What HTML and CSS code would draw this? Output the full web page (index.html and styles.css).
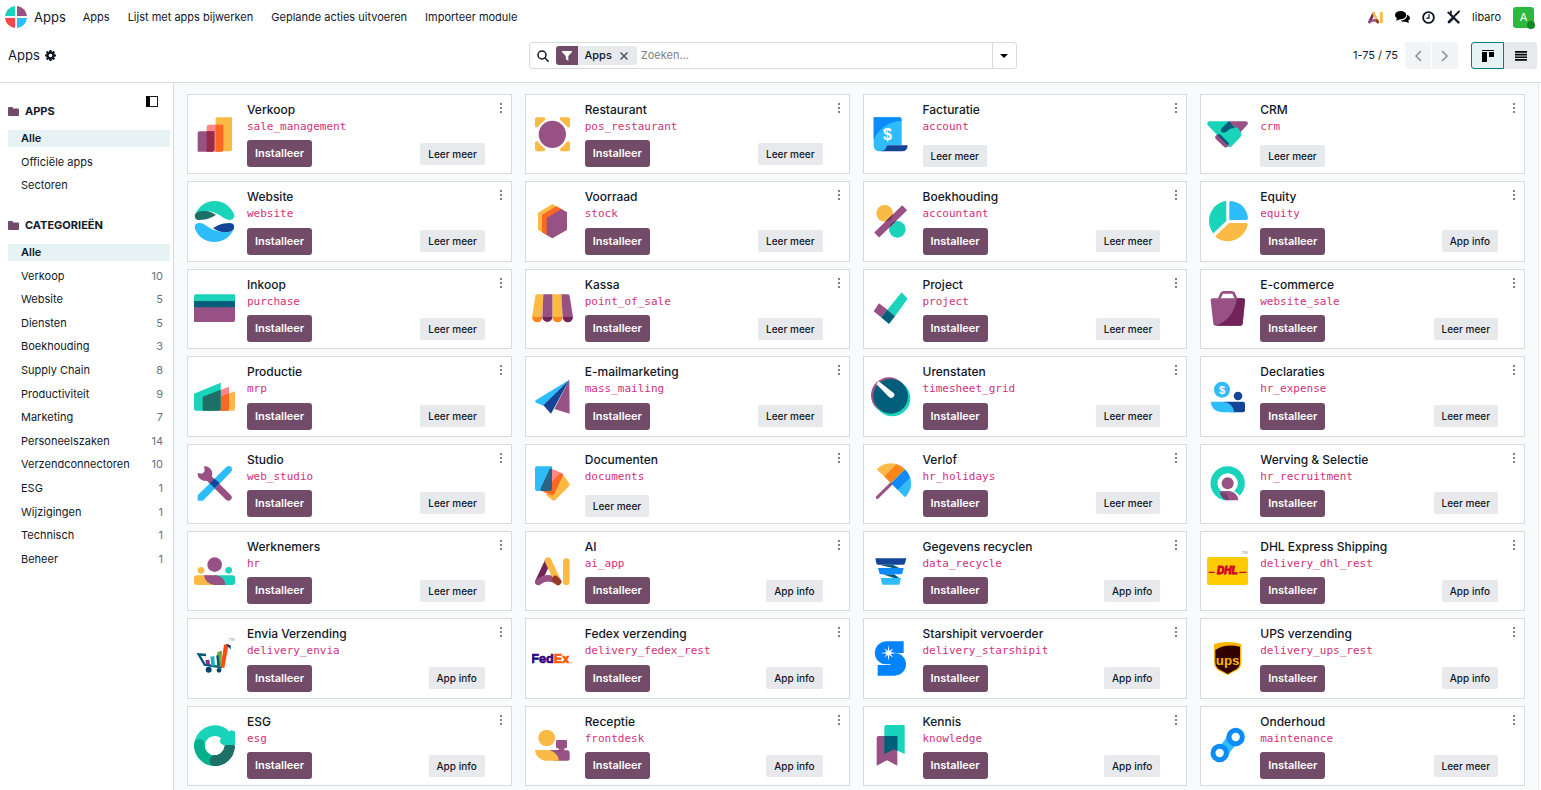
FILE: index.html
```html
<!DOCTYPE html>
<html lang="nl">
<head>
  <meta charset="UTF-8">
  <meta name="viewport" content="width=device-width, initial-scale=1.0">
  <title>Apps</title>
  <link rel="stylesheet" href="styles.css">
</head>
<body>
  <header class="navbar">
    <a class="brand" href="#">
      <svg class="brand-logo" viewBox="0 0 66 66"><path d="M30 0V30H0A33 33 0 0 1 30 0Z" fill="#1ad3bb"/><path d="M36 0V30H66A33 33 0 0 0 36 0Z" fill="#985184"/><path d="M30 66V36H0A33 33 0 0 0 30 66Z" fill="#ff4548"/><path d="M36 66V36H66A33 33 0 0 1 36 66Z" fill="#2ebcfa"/></svg>
      <span>Apps</span>
    </a>
    <nav class="menu">
      <a href="#">Apps</a>
      <a href="#">Lijst met apps bijwerken</a>
      <a href="#">Geplande acties uitvoeren</a>
      <a href="#">Importeer module</a>
    </nav>
    <div class="systray">
      <button type="button" aria-label="AI"><svg width="15" height="13" viewBox="0 0 105 84"><path d="M10 74L39 12" stroke="#71235a" stroke-width="18" stroke-linecap="round"/><path d="M10 74Q40 48 69 74" stroke="#985184" stroke-width="17" stroke-linecap="round" fill="none"/><path d="M39 12L69 74M94 11V74" stroke="#fbb945" stroke-width="19" stroke-linecap="round"/><path d="M60 62L69 74" stroke="#953b24" stroke-width="18" stroke-linecap="round"/></svg></button>
      <button type="button" aria-label="Berichten"><svg width="15" height="14" viewBox="0 0 16 14"><ellipse cx="6" cy="5" rx="6" ry="4.5"/><path d="M2 8L1 11L6 9Z"/><path d="M13 4.500C17 6 16.500 10 14 11L15 13.500L11 12C9 12.300 7 11.800 6 10.700C10.500 10.500 13 8 13 4.500Z"/></svg></button>
      <button type="button" aria-label="Activiteiten"><svg width="13" height="13" viewBox="0 0 14 14" fill="none" stroke="#111827" stroke-width="2"><circle cx="7" cy="7" r="5.800"/><path d="M7.500 3.500V7.700H4.500" stroke-width="1.400"/></svg></button>
      <button type="button" aria-label="Hulpmiddelen"><svg width="13" height="14" viewBox="0 0 13 14" fill="none" stroke="#111827" stroke-linecap="round"><path d="M4 5L11.500 12.500" stroke-width="2.400"/><path d="M1.200 2.500L3.500 4.500L4 1.500" stroke-width="1.800"/><path d="M12 1.500L7.500 6" stroke-width="1.800"/><path d="M5.500 8.500L2 12" stroke-width="2.800"/></svg></button>
      <span class="company">libaro</span>
      <button type="button" class="avatar" aria-label="Gebruiker">A<span class="status"></span></button>
    </div>
  </header>

  <div class="control-panel">
    <div class="breadcrumb">
      <h1>Apps</h1>
      <button type="button" aria-label="Acties"><svg width="11" height="11" viewBox="0 0 12 12"><circle cx="6" cy="6" r="3.300" fill="none" stroke="#111827" stroke-width="2.600"/><path d="M6 0V2.500M6 9.500V12M0 6H2.500M9.500 6H12M1.800 1.800L3.500 3.500M8.500 8.500L10.200 10.200M10.200 1.800L8.500 3.500M3.500 8.500L1.800 10.200" stroke="#111827" stroke-width="2.400"/></svg></button>
    </div>
    <div class="search">
      <svg class="search-icon" width="12" height="12" viewBox="0 0 12 12" fill="none" stroke="#111827" stroke-width="1.500" stroke-linecap="round"><circle cx="5" cy="5" r="4"/><path d="M8 8L11.200 11.200"/></svg>
      <div class="facet">
        <span class="facet-icon"><svg width="10" height="10" viewBox="0 0 10 10"><path d="M0 0H10V1L6.300 5V10L3.800 8V5L0 1Z" fill="#fff"/></svg></span>
        <span class="facet-label">Apps</span>
        <button type="button" aria-label="Verwijderen"><svg width="8" height="8" viewBox="0 0 8 8"><path d="M0.500 0.500L7.500 7.500M7.500 0.500L0.500 7.500" stroke="#4b5563" stroke-width="1.500"/></svg></button>
      </div>
      <input type="text" placeholder="Zoeken..." aria-label="Zoeken">
      <button type="button" class="search-toggle" aria-label="Filters"><svg width="8" height="4" viewBox="0 0 8 4"><path d="M0 0H8L4 4Z"/></svg></button>
    </div>
    <div class="panel-right">
      <span class="pager-text">1-75 / 75</span>
      <div class="pager">
        <button type="button" aria-label="Vorige"><svg width="8" height="12" viewBox="0 0 8 12"><path d="M7 1L2 6L7 11" fill="none" stroke="#8b8f98" stroke-width="1.500"/></svg></button>
        <button type="button" aria-label="Volgende"><svg width="8" height="12" viewBox="0 0 8 12"><path d="M1 1L6 6L1 11" fill="none" stroke="#8b8f98" stroke-width="1.500"/></svg></button>
      </div>
      <div class="views">
        <button type="button" class="active" aria-label="Kanban"><svg width="12" height="12" viewBox="0 0 12 12"><path d="M0 0H12V1H0ZM0 2H5V12H0ZM7 2H12V7H7Z"/></svg></button>
        <button type="button" aria-label="Lijst"><svg width="12" height="10" viewBox="0 0 12 10"><path d="M0 0H12V1.700H0ZM0 2.700H12V4.400H0ZM0 5.400H12V7.100H0ZM0 8.100H12V9.800H0Z"/></svg></button>
      </div>
    </div>
  </div>

  <div class="content">
    <aside class="sidebar">
      <button type="button" class="sidebar-toggle" aria-label="Zijbalk"><svg width="12" height="11" viewBox="0 0 12 11"><rect x="0.500" y="0.500" width="11" height="10" fill="none" stroke="#111827"/><path d="M0 0H4V11H0Z"/></svg></button>
      <section>
        <h2><svg width="11" height="9" viewBox="0 0 11 9"><path d="M0 1Q0 0 1 0H4Q5 0 5 1V1.500H10Q11 1.500 11 2.500V8Q11 9 10 9H1Q0 9 0 8Z" fill="#714b67"/></svg>APPS</h2>
        <ul>
          <li class="selected"><a href="#">Alle</a></li>
          <li><a href="#">Officiële apps</a></li>
          <li><a href="#">Sectoren</a></li>
        </ul>
      </section>
      <section>
        <h2><svg width="11" height="9" viewBox="0 0 11 9"><path d="M0 1Q0 0 1 0H4Q5 0 5 1V1.500H10Q11 1.500 11 2.500V8Q11 9 10 9H1Q0 9 0 8Z" fill="#714b67"/></svg>CATEGORIEËN</h2>
        <ul class="categories">
          <li class="selected"><a href="#">Alle</a></li>
          <li><a href="#">Verkoop</a><span>10</span></li>
          <li><a href="#">Website</a><span>5</span></li>
          <li><a href="#">Diensten</a><span>5</span></li>
          <li><a href="#">Boekhouding</a><span>3</span></li>
          <li><a href="#">Supply Chain</a><span>8</span></li>
          <li><a href="#">Productiviteit</a><span>9</span></li>
          <li><a href="#">Marketing</a><span>7</span></li>
          <li><a href="#">Personeelszaken</a><span>14</span></li>
          <li><a href="#">Verzendconnectoren</a><span>10</span></li>
          <li><a href="#">ESG</a><span>1</span></li>
          <li><a href="#">Wijzigingen</a><span>1</span></li>
          <li><a href="#">Technisch</a><span>1</span></li>
          <li><a href="#">Beheer</a><span>1</span></li>
        </ul>
      </section>
    </aside>

    <main class="kanban">
      <article class="card">
        <svg class="icon" viewBox="0 0 123 123"><path d="M65 16Q65 10 71 10H114V106Q114 112 108 112H65Z" fill="#fbb945"/><path d="M38 38Q38 32 44 32H88V106Q88 113 82 113H38Z" fill="#ff8687"/><path d="M65 32H88V106Q88 113 82 113H65Z" fill="#fc6722"/><path d="M11 58Q11 52 17 52H61V106Q61 113 55 113H11Z" fill="#985184"/><path d="M38 52H61V106Q61 113 55 113H38Z" fill="#962b48"/></svg>
        <div class="body">
          <h3>Verkoop</h3>
          <code>sale_management</code>
          <div class="actions"><button type="button" class="install">Installeer</button><a class="info" href="#">Leer meer</a></div>
        </div>
        <button type="button" class="kebab" aria-label="Menu"></button>
      </article>
      <article class="card">
        <svg class="icon" viewBox="0 0 123 123"><path id="corner" d="M15 10H34Q42 11 39 17L16 40Q9 42 9 35V16Q9 10 15 10Z" fill="#fbb945"/><use href="#corner" transform="matrix(-1 0 0 1 123 0)"/><use href="#corner" transform="matrix(1 0 0 -1 0 122)"/><use href="#corner" transform="matrix(-1 0 0 -1 123 122)"/><circle cx="61" cy="61" r="46" fill="#fff"/><circle cx="61" cy="61" r="41" fill="#985184"/></svg>
        <div class="body">
          <h3>Restaurant</h3>
          <code>pos_restaurant</code>
          <div class="actions"><button type="button" class="install">Installeer</button><a class="info" href="#">Leer meer</a></div>
        </div>
        <button type="button" class="kebab" aria-label="Menu"></button>
      </article>
      <article class="card">
        <svg class="icon" viewBox="0 0 123 123"><path d="M11 10H88Q95 10 95 17V94H50Q48 112 30 112Q11 112 11 94Z" fill="#2ebcfa"/><path d="M11 10H88Q95 10 95 20Q35 24 11 78Z" fill="#0d8cf9"/><path d="M50 94H113Q112 112 97 112H32Q48 110 50 94Z" fill="#144496"/><text x="52" y="78" class="logo-text" font-size="48" fill="#fff">$</text></svg>
        <div class="body">
          <h3>Facturatie</h3>
          <code>account</code>
          <div class="actions"><a class="info" href="#">Leer meer</a></div>
        </div>
        <button type="button" class="kebab" aria-label="Menu"></button>
      </article>
      <article class="card">
        <svg class="icon" viewBox="0 0 123 123"><path d="M62 22H117Q126 24 121 32L98 58L70 45Z" fill="#985184"/><path d="M7 22H62L88 42L92 40L103 58Q104 66 98 72L74 97Q68 102 62 97L2 33Q-2 24 7 22Z" fill="#1ad3bb"/><path d="M34 70L56 91" stroke="#985184" stroke-width="18" stroke-linecap="round"/><path d="M37 64L61 88" stroke="#005e7a" stroke-width="8" stroke-linecap="round"/><path d="M64 23L44 43Q38 52 47 56Q55 58 64 49Q70 42 84 42L68 23Z" fill="#005e7a"/></svg>
        <div class="body">
          <h3>CRM</h3>
          <code>crm</code>
          <div class="actions"><a class="info" href="#">Leer meer</a></div>
        </div>
        <button type="button" class="kebab" aria-label="Menu"></button>
      </article>

      <article class="card">
        <svg class="icon" viewBox="0 0 123 123"><path d="M4 40C12 18 34 0 62 0C90 0 112 18 120 40C123 50 117 57 106 57C88 57 74 31 38 31C24 31 14 34 4 40Z" fill="#1ad3bb"/><path d="M4 38C12 30 24 29 36 30C52 32 60 38 66 42C54 48 42 57 16 57C4 57 0 48 4 38Z" fill="#1d7066"/><path d="M119 83C111 105 89 123 61 123C33 123 11 105 3 83C0 73 6 66 17 66C35 66 49 92 85 92C99 92 109 89 119 83Z" fill="#2ebcfa"/><path d="M119 85C111 93 99 94 87 93C71 91 63 85 57 81C69 75 81 66 107 66C119 66 123 75 119 85Z" fill="#144496"/></svg>
        <div class="body">
          <h3>Website</h3>
          <code>website</code>
          <div class="actions"><button type="button" class="install">Installeer</button><a class="info" href="#">Leer meer</a></div>
        </div>
        <button type="button" class="kebab" aria-label="Menu"></button>
      </article>
      <article class="card">
        <svg class="icon" viewBox="0 0 123 123"><path d="M61 9L105 34V86L61 112L18 86V35Z" fill="#fbb945"/><path d="M30 41L73 16L88 24V90L44 102L30 94Z" fill="#fc6722"/><path d="M44 50L88 24L105 34V86L61 112L44 102Z" fill="#985184"/></svg>
        <div class="body">
          <h3>Voorraad</h3>
          <code>stock</code>
          <div class="actions"><button type="button" class="install">Installeer</button><a class="info" href="#">Leer meer</a></div>
        </div>
        <button type="button" class="kebab" aria-label="Menu"></button>
      </article>
      <article class="card">
        <svg class="icon" viewBox="0 0 123 123"><clipPath id="dots"><circle cx="44" cy="37" r="25"/><circle cx="82" cy="85" r="25"/></clipPath><circle cx="44" cy="37" r="25" fill="#fbb945"/><circle cx="82" cy="85" r="25" fill="#1ad3bb"/><path d="M20 102L104 20" stroke="#985184" stroke-width="21"/><path d="M20 102L104 20" stroke="#6b2a50" stroke-width="21" clip-path="url(#dots)"/></svg>
        <div class="body">
          <h3>Boekhouding</h3>
          <code>accountant</code>
          <div class="actions"><button type="button" class="install">Installeer</button><a class="info" href="#">Leer meer</a></div>
        </div>
        <button type="button" class="kebab" aria-label="Menu"></button>
      </article>
      <article class="card">
        <svg class="icon" viewBox="0 0 123 123"><path d="M67 5Q67 0 72 0Q116 6 123 50Q123 57 117 57H67Z" fill="#2ebcfa"/><path d="M58 4V60L19 97A61 61 0 0 1 54 0Q58 0 58 4Z" fill="#1ad3bb"/><path d="M66 66H118Q123 66 122 71A61 61 0 0 1 29 111Q24 107 28 103Z" fill="#fbb945"/></svg>
        <div class="body">
          <h3>Equity</h3>
          <code>equity</code>
          <div class="actions"><button type="button" class="install">Installeer</button><a class="info" href="#">App info</a></div>
        </div>
        <button type="button" class="kebab" aria-label="Menu"></button>
      </article>

      <article class="card">
        <svg class="icon" viewBox="0 0 123 123"><path d="M0 39H123V96Q123 102 117 102H0Z" fill="#985184"/><path d="M0 25Q0 19 6 19H123V39H0Z" fill="#1ad3bb"/><path d="M0 39H123V52Q123 58 117 58H6Q0 58 0 52Z" fill="#005e7a"/></svg>
        <div class="body">
          <h3>Inkoop</h3>
          <code>purchase</code>
          <div class="actions"><button type="button" class="install">Installeer</button><a class="info" href="#">Leer meer</a></div>
        </div>
        <button type="button" class="kebab" aria-label="Menu"></button>
      </article>
      <article class="card">
        <svg class="icon" viewBox="0 0 123 123"><path d="M0 87A15 15 0 0 0 31 87ZM61 87A15 15 0 0 0 92 87Z" fill="#fc8617"/><path d="M31 87A15 15 0 0 0 61 87ZM92 87A15 15 0 0 0 123 87Z" fill="#71235a"/><path d="M10 24Q11 19 16 19H34L31 87H0ZM61 19H88L92 87H61Z" fill="#fbb945"/><path d="M34 19H61V87H31ZM88 19H108Q112 19 113 24L123 87H92Z" fill="#985184"/></svg>
        <div class="body">
          <h3>Kassa</h3>
          <code>point_of_sale</code>
          <div class="actions"><button type="button" class="install">Installeer</button><a class="info" href="#">Leer meer</a></div>
        </div>
        <button type="button" class="kebab" aria-label="Menu"></button>
      </article>
      <article class="card">
        <svg class="icon" viewBox="0 0 123 123"><path d="M95 13L113 32L75 85L52 65Z" fill="#1ad3bb"/><path d="M27 46L52 65L33 88L11 70Z" fill="#985184"/><path d="M52 65L75 85L57 108L33 88Z" fill="#005e7a"/></svg>
        <div class="body">
          <h3>Project</h3>
          <code>project</code>
          <div class="actions"><button type="button" class="install">Installeer</button><a class="info" href="#">Leer meer</a></div>
        </div>
        <button type="button" class="kebab" aria-label="Menu"></button>
      </article>
      <article class="card">
        <svg class="icon" viewBox="0 0 123 123"><path d="M36 33L44 16Q46 13 50 13H74Q78 13 80 16L88 33" fill="none" stroke="#985184" stroke-width="8"/><path d="M17 31H108Q114 31 114 37L107 107Q106 113 100 113H26Q20 113 19 107L11 37Q11 31 17 31Z" fill="#985184"/><path d="M90 31H108Q114 31 114 37L107 107Q106 113 100 113H26Q80 95 90 31Z" fill="#71235a"/></svg>
        <div class="body">
          <h3>E-commerce</h3>
          <code>website_sale</code>
          <div class="actions"><button type="button" class="install">Installeer</button><a class="info" href="#">Leer meer</a></div>
        </div>
        <button type="button" class="kebab" aria-label="Menu"></button>
      </article>

      <article class="card">
        <svg class="icon" viewBox="0 0 123 123"><path d="M80 63L123 46V98Q123 104 117 104H80Z" fill="#fbb945"/><path d="M78 43L105 32V98Q105 104 99 104H78Z" fill="#ff8687"/><path d="M78 62L105 52V98Q105 104 99 104H78Z" fill="#fc6722"/><path d="M0 53L80 20V98Q80 104 74 104H6Q0 104 0 98Z" fill="#1ad3bb"/><path d="M26 62L80 41V98Q80 104 74 104H26Z" fill="#1d7066"/></svg>
        <div class="body">
          <h3>Productie</h3>
          <code>mrp</code>
          <div class="actions"><button type="button" class="install">Installeer</button><a class="info" href="#">Leer meer</a></div>
        </div>
        <button type="button" class="kebab" aria-label="Menu"></button>
      </article>
      <article class="card">
        <svg class="icon" viewBox="0 0 123 123"><path d="M112 11L113 113L67 99Z" fill="#985184"/><path d="M112 11L11 73Q7 77 12 80L34 89Z" fill="#2ebcfa"/><path d="M112 11L34 88L57 113Z" fill="#144496"/></svg>
        <div class="body">
          <h3>E-mailmarketing</h3>
          <code>mass_mailing</code>
          <div class="actions"><button type="button" class="install">Installeer</button><a class="info" href="#">Leer meer</a></div>
        </div>
        <button type="button" class="kebab" aria-label="Menu"></button>
      </article>
      <article class="card">
        <svg class="icon" viewBox="0 0 123 123"><circle cx="57" cy="58" r="54" fill="#985184"/><circle cx="67" cy="67" r="54" fill="#1ad3bb"/><circle cx="62" cy="61" r="52" fill="#005e7a"/><path d="M26 16L70 50A9 9 0 0 1 57 63L19 24Z" fill="#fff"/></svg>
        <div class="body">
          <h3>Urenstaten</h3>
          <code>timesheet_grid</code>
          <div class="actions"><button type="button" class="install">Installeer</button><a class="info" href="#">Leer meer</a></div>
        </div>
        <button type="button" class="kebab" aria-label="Menu"></button>
      </article>
      <article class="card">
        <svg class="icon" viewBox="0 0 123 123"><circle cx="45" cy="41" r="24" fill="#2ebcfa"/><text x="45" y="53" class="logo-text" font-size="33" fill="#fff">$</text><circle cx="93" cy="60" r="13" fill="#144496"/><path d="M50 77H108Q114 77 114 83V103Q114 109 108 109H70Z" fill="#144496"/><path d="M11 77H48Q78 80 82 109H44Q14 106 11 77Z" fill="#2ebcfa"/></svg>
        <div class="body">
          <h3>Declaraties</h3>
          <code>hr_expense</code>
          <div class="actions"><button type="button" class="install">Installeer</button><a class="info" href="#">Leer meer</a></div>
        </div>
        <button type="button" class="kebab" aria-label="Menu"></button>
      </article>

      <article class="card">
        <svg class="icon" viewBox="0 0 123 123"><path d="M40 41L103 103" stroke="#985184" stroke-width="20" stroke-linecap="round"/><circle cx="33" cy="32" r="22" fill="#985184"/><path d="M12 8L30 10L32 24L25 32L10 30Z" fill="#fff"/><path d="M11 113V97L97 12Q106 6 112 13Q117 20 111 27L27 113Z" fill="#2ebcfa"/><path d="M62 47L77 61L62 76L47 61Z" fill="#144496"/></svg>
        <div class="body">
          <h3>Studio</h3>
          <code>web_studio</code>
          <div class="actions"><button type="button" class="install">Installeer</button><a class="info" href="#">Leer meer</a></div>
        </div>
        <button type="button" class="kebab" aria-label="Menu"></button>
      </article>
      <article class="card">
        <svg class="icon" viewBox="0 0 123 123"><path d="M82 33L90 31L111 60Q115 66 111 70L70 111Q65 115 60 111L42 95Z" fill="#fbb945"/><path d="M58 17L88 29Q94 32 92 38L68 91Q65 98 59 96L29 84Z" fill="#ff8687"/><path d="M92 33V38L68 91Q65 98 59 96L35 86L80 34Q86 30 92 33Z" fill="#fc6722"/><path d="M9 16Q9 10 15 10H60V78Q60 84 54 84H15Q9 84 9 78Z" fill="#2ebcfa"/><path d="M52 20Q54 15 60 17V78Q60 84 54 84H29Q24 82 26 76Z" fill="#2c6284"/></svg>
        <div class="body">
          <h3>Documenten</h3>
          <code>documents</code>
          <div class="actions"><a class="info" href="#">Leer meer</a></div>
        </div>
        <button type="button" class="kebab" aria-label="Menu"></button>
      </article>
      <article class="card">
        <svg class="icon" viewBox="0 0 123 123"><path d="M22 103L64 62" stroke="#985184" stroke-width="9" stroke-linecap="round"/><path d="M20 19A60 60 0 0 1 79 3L42 40Z" fill="#fbb945"/><path d="M79 3A60 60 0 0 1 105 19L63 61L42 40Z" fill="#fc8617"/><path d="M105 19A60 60 0 0 1 121 45L84 82L63 61Z" fill="#0d8cf9"/><path d="M121 45A60 60 0 0 1 105 103L84 82Z" fill="#2ebcfa"/></svg>
        <div class="body">
          <h3>Verlof</h3>
          <code>hr_holidays</code>
          <div class="actions"><button type="button" class="install">Installeer</button><a class="info" href="#">Leer meer</a></div>
        </div>
        <button type="button" class="kebab" aria-label="Menu"></button>
      </article>
      <article class="card">
        <svg class="icon" viewBox="0 0 123 123"><circle cx="62" cy="61" r="41" fill="none" stroke="#1ad3bb" stroke-width="21"/><path d="M66 84H78Q86 84 94 94L102 102L96 120H60Z" fill="#fff"/><circle cx="62" cy="61" r="18" fill="#985184"/><path d="M40 84H66Q92 88 94 112H62Q40 108 40 84Z" fill="#985184"/><path d="M40 86Q50 92 60 92L66 112Q40 108 40 86Z" fill="#7a3d6b"/></svg>
        <div class="body">
          <h3>Werving &amp; Selectie</h3>
          <code>hr_recruitment</code>
          <div class="actions"><button type="button" class="install">Installeer</button><a class="info" href="#">Leer meer</a></div>
        </div>
        <button type="button" class="kebab" aria-label="Menu"></button>
      </article>

      <article class="card">
        <svg class="icon" viewBox="0 0 123 123"><circle cx="21" cy="58" r="10" fill="#fbb945"/><circle cx="104" cy="58" r="10" fill="#1ad3bb"/><circle cx="62" cy="41" r="22" fill="#985184"/><path d="M8 73H60V102H8Q0 102 0 94V81Q0 73 8 73Z" fill="#fbb945"/><path d="M60 73H115Q123 73 123 81V94Q123 102 115 102H60Z" fill="#1ad3bb"/><path d="M30 73H66Q92 76 94 102H62Q34 100 30 73Z" fill="#985184"/></svg>
        <div class="body">
          <h3>Werknemers</h3>
          <code>hr</code>
          <div class="actions"><button type="button" class="install">Installeer</button><a class="info" href="#">Leer meer</a></div>
        </div>
        <button type="button" class="kebab" aria-label="Menu"></button>
      </article>
      <article class="card">
        <svg class="icon" viewBox="0 0 123 123" fill="none" stroke-linecap="round"><path d="M19 92L48 30" stroke="#71235a" stroke-width="19"/><path d="M19 93Q48 70 78 93" stroke="#985184" stroke-width="19"/><path d="M48 29L78 92M103 32V92" stroke="#fbb945" stroke-width="20"/><path d="M70 84L78 92" stroke="#953b24" stroke-width="20"/></svg>
        <div class="body">
          <h3>AI</h3>
          <code>ai_app</code>
          <div class="actions"><button type="button" class="install">Installeer</button><a class="info" href="#">App info</a></div>
        </div>
        <button type="button" class="kebab" aria-label="Menu"></button>
      </article>
      <article class="card">
        <svg class="icon" viewBox="0 0 123 123"><path d="M28 41H68L88 51H68ZM38 70H72L88 81H72Z" fill="#005e7a"/><path d="M16 22H109L105 37Q104 41 100 41H24Q20 41 19 37Z" fill="#144496"/><path d="M24 51H101L97 66Q96 70 92 70H33Q29 70 28 66Z" fill="#0d8cf9"/><path d="M32 81H93L88 101H37Z" fill="#2ebcfa"/></svg>
        <div class="body">
          <h3>Gegevens recyclen</h3>
          <code>data_recycle</code>
          <div class="actions"><button type="button" class="install">Installeer</button><a class="info" href="#">App info</a></div>
        </div>
        <button type="button" class="kebab" aria-label="Menu"></button>
      </article>
      <article class="card">
        <svg class="icon" viewBox="0 0 123 123"><text x="113" y="9" class="logo-text" font-size="12" fill="#b5b5b5">TM</text><rect y="18" width="123" height="84" rx="7" fill="#fecc00"/><path d="M5 62H24L22 66H5ZM98 62H118V66H96Z" fill="#d50029"/><text x="61" y="70" class="logo-text" font-size="30" font-style="italic" fill="#d50029" stroke="#d50029" stroke-width="3">DHL</text></svg>
        <div class="body">
          <h3>DHL Express Shipping</h3>
          <code>delivery_dhl_rest</code>
          <div class="actions"><button type="button" class="install">Installeer</button><a class="info" href="#">App info</a></div>
        </div>
        <button type="button" class="kebab" aria-label="Menu"></button>
      </article>

      <article class="card">
        <svg class="icon" viewBox="0 0 123 123"><text x="113" y="9" class="logo-text" font-size="12" fill="#b5b5b5">TM</text><path d="M36 51L14 49L32 80L84 88" fill="none" stroke="#00567c" stroke-width="7"/><path d="M34 66L46 65L48 82L37 80Z" fill="#8c2a8c"/><path d="M49 56L61 54L63 85L52 83Z" fill="#19b5b8"/><path d="M70 42L84 38L82 87L68 85Z" fill="#6fa53a"/><path d="M70 52L74 84" stroke="#00567c" stroke-width="7"/><path d="M90 20L104 17L91 90L80 88Z" fill="#ff4b12"/><path d="M96 19L110 22L110 34L102 26Z" fill="#00456b"/><circle cx="44" cy="95" r="9" fill="#00456b"/><circle cx="75" cy="97" r="7" fill="#00456b"/></svg>
        <div class="body">
          <h3>Envia Verzending</h3>
          <code>delivery_envia</code>
          <div class="actions"><button type="button" class="install">Installeer</button><a class="info" href="#">App info</a></div>
        </div>
        <button type="button" class="kebab" aria-label="Menu"></button>
      </article>
      <article class="card">
        <svg class="icon" viewBox="0 0 123 123"><text x="55" y="76" class="logo-text" font-size="38" fill="#2f0080" stroke="#2f0080" stroke-width="2">Fed<tspan fill="#ff5a00" stroke="#ff5a00">Ex</tspan></text><circle cx="118" cy="74" r="3" fill="#ffb48a"/></svg>
        <div class="body">
          <h3>Fedex verzending</h3>
          <code>delivery_fedex_rest</code>
          <div class="actions"><button type="button" class="install">Installeer</button><a class="info" href="#">App info</a></div>
        </div>
        <button type="button" class="kebab" aria-label="Menu"></button>
      </article>
      <article class="card">
        <svg class="icon" viewBox="0 0 123 123"><path d="M50 10H101V45H74A34 34 0 0 1 74 113H23V81H62V79H48A34 34 0 0 1 50 10Z" fill="#0083ff"/><path d="M56 20L58 39L70 31L62 43L80 45L62 48L70 59L58 51L56 69L53 51L42 59L50 48L32 45L50 43L42 31L53 39Z" fill="#fff"/></svg>
        <div class="body">
          <h3>Starshipit vervoerder</h3>
          <code>delivery_starshipit</code>
          <div class="actions"><button type="button" class="install">Installeer</button><a class="info" href="#">App info</a></div>
        </div>
        <button type="button" class="kebab" aria-label="Menu"></button>
      </article>
      <article class="card">
        <svg class="icon" viewBox="0 0 123 123"><path d="M21 18Q62 6 103 18V72Q103 93 84 100L62 112L40 100Q21 93 21 72Z" fill="#ffb500"/><path d="M25 36Q55 16 99 26V72Q99 90 82 97L62 108L42 97Q25 90 25 72Z" fill="#330000"/><text x="62" y="80" class="logo-text" font-size="40" fill="#ffb500">ups</text></svg>
        <div class="body">
          <h3>UPS verzending</h3>
          <code>delivery_ups_rest</code>
          <div class="actions"><button type="button" class="install">Installeer</button><a class="info" href="#">App info</a></div>
        </div>
        <button type="button" class="kebab" aria-label="Menu"></button>
      </article>

      <article class="card">
        <svg class="icon" viewBox="0 0 123 123" fill="none" stroke-width="32" stroke-linecap="round"><path d="M63 107A46 46 0 0 0 107 66" stroke="#1d7066"/><path d="M16 61A46 46 0 0 0 63 107" stroke="#00b08c"/><path d="M63 107A46 46 0 0 0 100 86" stroke="#1d7066"/><path d="M18 50A46 46 0 0 1 92 28" stroke="#1ad3bb"/><path d="M16 58V64" stroke="#00b08c"/><path d="M123 20V60H88Q76 56 78 44L104 22Q112 10 123 20Z" fill="#1ad3bb" stroke="none"/></svg>
        <div class="body">
          <h3>ESG</h3>
          <code>esg</code>
          <div class="actions"><button type="button" class="install">Installeer</button><a class="info" href="#">App info</a></div>
        </div>
        <button type="button" class="kebab" aria-label="Menu"></button>
      </article>
      <article class="card">
        <svg class="icon" viewBox="0 0 123 123"><circle cx="44" cy="39" r="25" fill="#fbb945"/><path d="M76 45H101Q105 45 105 49V66Q105 70 101 70H97V76H107Q113 77 113 83V101Q113 107 107 107H66L54 75H80V70H76Q72 70 72 66V49Q72 45 76 45Z" fill="#985184"/><path d="M9 75H48Q77 80 81 107H42Q12 104 9 75Z" fill="#fbb945"/></svg>
        <div class="body">
          <h3>Receptie</h3>
          <code>frontdesk</code>
          <div class="actions"><button type="button" class="install">Installeer</button><a class="info" href="#">App info</a></div>
        </div>
        <button type="button" class="kebab" aria-label="Menu"></button>
      </article>
      <article class="card">
        <svg class="icon" viewBox="0 0 123 123"><path d="M43 6Q43 0 49 0H104V87L73 73L43 87Z" fill="#1ad3bb"/><path d="M20 39Q20 33 26 33H82V122L51 106L20 122Z" fill="#985184"/><path d="M43 33H82V77L73 73L43 87Z" fill="#005e7a"/></svg>
        <div class="body">
          <h3>Kennis</h3>
          <code>knowledge</code>
          <div class="actions"><button type="button" class="install">Installeer</button><a class="info" href="#">App info</a></div>
        </div>
        <button type="button" class="kebab" aria-label="Menu"></button>
      </article>
      <article class="card">
        <svg class="icon" viewBox="0 0 123 123"><path d="M20 68Q52 62 62 24L108 52Q74 60 62 98Z" fill="#2ebcfa"/><circle cx="86" cy="36" r="20" fill="#fff" stroke="#0d8cf9" stroke-width="15"/><circle cx="38" cy="84" r="20" fill="#fff" stroke="#0d8cf9" stroke-width="15"/></svg>
        <div class="body">
          <h3>Onderhoud</h3>
          <code>maintenance</code>
          <div class="actions"><button type="button" class="install">Installeer</button><a class="info" href="#">Leer meer</a></div>
        </div>
        <button type="button" class="kebab" aria-label="Menu"></button>
      </article>
    </main>
  </div>
</body>
</html>
```
FILE: styles.css
```css
* {
  box-sizing: border-box;
}
body {
  margin: 0;
  min-height: 100vh;
  display: flex;
  flex-direction: column;
  font-family: Inter, sans-serif;
  font-size: 11px;
  line-height: 17px;
  color: #111827;
  background: #fff;
}
a {
  color: inherit;
  text-decoration: none;
}
button {
  display: flex;
  align-items: center;
  justify-content: center;
  padding: 0;
  border: 0;
  background: none;
  color: inherit;
  font: inherit;
  cursor: pointer;
}
h1, h2, h3, ul {
  margin: 0;
  padding: 0;
}
svg {
  flex: none;
}

/* top bar */
.navbar {
  display: flex;
  align-items: center;
  height: 34px;
  padding: 0 7px 0 5px;
}
.brand {
  display: flex;
  align-items: center;
  gap: 7px;
  margin-right: 17px;
  font-size: 13px;
}
.brand-logo {
  width: 22px;
  height: 22px;
}
.menu {
  display: flex;
  gap: 18px;
}
.systray {
  display: flex;
  align-items: center;
  gap: 12px;
  margin-left: auto;
}
.avatar {
  position: relative;
  width: 21px;
  height: 21px;
  border-radius: 3px;
  background: #2eb840;
  color: #fff;
}
.status {
  position: absolute;
  right: -1px;
  bottom: -1px;
  width: 8px;
  height: 8px;
  border-radius: 50%;
  background: #0d8a22;
}

/* control panel */
.control-panel {
  display: grid;
  grid-template-columns: 1fr minmax(0, 488px) 1fr;
  align-items: start;
  height: 49px;
  padding: 8px 4px 0 8px;
  border-bottom: 1px solid #d8dadd;
}
.breadcrumb {
  display: flex;
  align-items: center;
  gap: 5px;
  height: 27px;
}
.breadcrumb h1 {
  font-size: 13px;
  font-weight: 400;
}
.search {
  display: flex;
  align-items: center;
  height: 27px;
  padding-left: 7px;
  border: 1px solid #d8dadd;
  border-radius: 3px;
}
.facet {
  display: flex;
  align-items: center;
  gap: 7px;
  height: 19px;
  margin: 0 4px 0 7px;
  padding-right: 9px;
  border-radius: 3px;
  background: #e7e9ed;
  overflow: hidden;
  font-weight: 500;
}
.facet button {
  margin-left: 1px;
}
.facet-icon {
  display: flex;
  align-items: center;
  justify-content: center;
  width: 22px;
  height: 19px;
  background: #714b67;
}
.search input {
  flex: 1;
  min-width: 0;
  padding: 0;
  border: 0;
  outline: 0;
  background: none;
  font: inherit;
}
.search input::placeholder {
  color: #7c8088;
}
.search-toggle {
  width: 24px;
  height: 25px;
  border-left: 1px solid #d8dadd;
}
.panel-right {
  display: flex;
  align-items: center;
  justify-content: flex-end;
}
.pager {
  display: flex;
  gap: 1px;
  margin: 0 13px 0 7px;
}
.pager button {
  width: 26px;
  height: 27px;
  background: #f3f4f6;
}
.pager button:first-child {
  border-radius: 3px 0 0 3px;
}
.pager button:last-child {
  border-radius: 0 3px 3px 0;
}
.views {
  display: flex;
}
.views button {
  width: 33px;
  height: 27px;
  border-radius: 0 3px 3px 0;
  background: #e7e9ed;
}
.views .active {
  border: 1px solid #017e84;
  border-radius: 3px 0 0 3px;
  background: #e6f2f3;
}

/* layout */
.content {
  display: flex;
  flex: 1;
}
.sidebar {
  position: relative;
  width: 174px;
  flex: none;
  padding: 20px 3px 0 8px;
  border-right: 1px solid #d8dadd;
}
.sidebar-toggle {
  position: absolute;
  top: 13px;
  right: 15px;
}
.sidebar section {
  margin-bottom: 23px;
}
.sidebar h2 {
  display: flex;
  align-items: center;
  gap: 6px;
  margin-bottom: 10px;
  font-size: 11px;
  font-weight: 700;
}
.sidebar ul {
  display: flex;
  flex-direction: column;
  justify-content: space-between;
  gap: 6px;
  min-height: 64px;
  list-style: none;
}
.sidebar .categories {
  min-height: 324px;
}
.sidebar li {
  display: flex;
  justify-content: space-between;
  height: 17px;
  padding: 0 7px 0 13px;
}
.sidebar li span {
  color: #6b7280;
}
.sidebar .selected {
  background: #e6f2f3;
  font-weight: 600;
}

/* cards */
.kanban {
  flex: 1;
  display: grid;
  grid-template-columns: repeat(4, 1fr);
  grid-auto-rows: 1fr;
  gap: 7px 13px;
  margin-right: 2px;
  padding: 11px 13px 4px;
  border-right: 1px solid #e7e9ed;
  background: #f9fafb;
}
.card {
  position: relative;
  display: flex;
  align-items: center;
  gap: 12px;
  padding: 0 26px 0 6px;
  border: 1px solid #d8dadd;
  background: #fff;
}
.icon {
  width: 41px;
  height: 41px;
}
.logo-text {
  font-family: "Liberation Sans", sans-serif;
  font-weight: 700;
  text-anchor: middle;
}
.body {
  flex: 1;
  align-self: stretch;
  display: flex;
  flex-direction: column;
  padding: 5px 0 6px;
}
.card h3 {
  font-size: 12px;
  font-weight: 500;
  line-height: 20px;
}
.card code {
  color: #d2317b;
  font-family: "DejaVu Sans Mono", monospace;
  font-size: 11px;
  line-height: 13px;
}
.actions {
  display: flex;
  align-items: center;
  justify-content: space-between;
  margin-top: auto;
}
.install {
  height: 27px;
  padding: 0 8px;
  border-radius: 3px;
  background: #714b67;
  color: #fff;
  font-weight: 600;
}
.info {
  height: 22px;
  padding: 0 8px;
  border-radius: 2px;
  background: #e7e9ed;
  font-size: 10px;
  font-weight: 500;
  line-height: 22px;
}
.kebab {
  position: absolute;
  top: 8px;
  right: 8px;
  width: 4px;
  height: 10px;
}
.kebab::before {
  content: "";
  width: 2px;
  height: 2px;
  background: #7c828e;
  box-shadow: 0 -4px #7c828e, 0 4px #7c828e;
}
```
